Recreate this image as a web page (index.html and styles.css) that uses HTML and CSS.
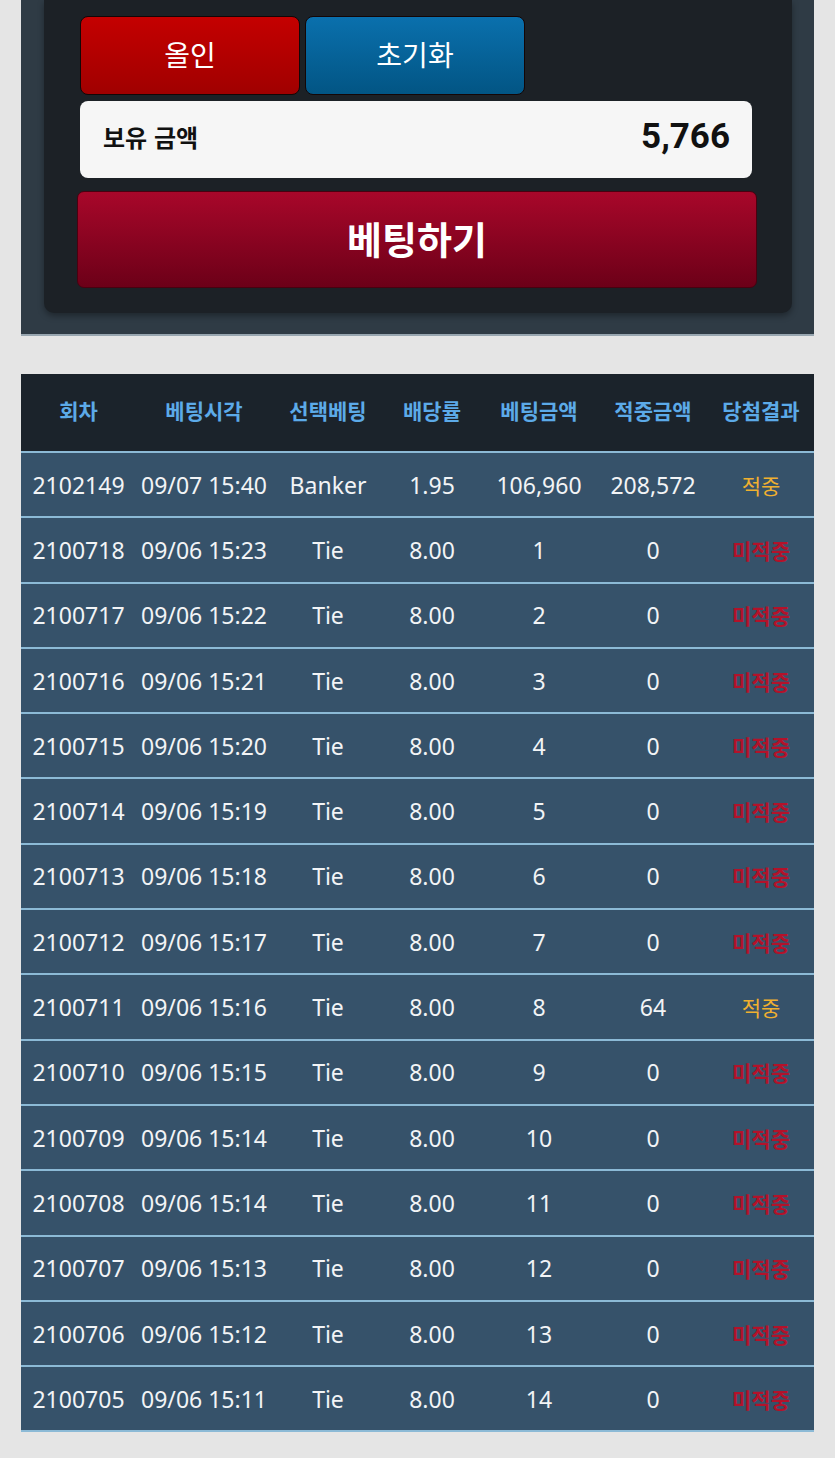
FILE: index.html
```html
<!DOCTYPE html>
<html lang="ko">
<head>
  <meta charset="UTF-8" />
  <meta name="viewport" content="width=device-width, initial-scale=1.0"/>
  <title>베팅</title>
  <link rel="stylesheet" href="styles.css">
</head>
<body>

  <!-- Bet Panel -->
  <div class="bet-wrap">
    <div class="bet-panel">
      <div class="quick-row">
        <button class="btn-allin">올인</button>
        <button class="btn-reset">초기화</button>
      </div>
      <div class="balance">
        <span class="balance-label">보유 금액</span>
        <span class="balance-value">5,766</span>
      </div>
      <button class="btn-bet">베팅하기</button>
    </div>
  </div>

  <!-- Bet History -->
  <table class="history">
    <colgroup>
      <col style="width:115px">
      <col style="width:136px">
      <col style="width:112px">
      <col style="width:96px">
      <col style="width:118px">
      <col style="width:110px">
      <col style="width:106px">
    </colgroup>
    <thead>
      <tr>
        <th>회차</th>
        <th>베팅시각</th>
        <th>선택베팅</th>
        <th>배당률</th>
        <th>베팅금액</th>
        <th>적중금액</th>
        <th>당첨결과</th>
      </tr>
    </thead>
    <tbody id="historyBody"></tbody>
  </table>

  <script>
    const rows = [
      ["2102149", "09/07 15:40", "Banker", "1.95", "106,960", "208,572", true],
      ["2100718", "09/06 15:23", "Tie", "8.00", "1", "0", false],
      ["2100717", "09/06 15:22", "Tie", "8.00", "2", "0", false],
      ["2100716", "09/06 15:21", "Tie", "8.00", "3", "0", false],
      ["2100715", "09/06 15:20", "Tie", "8.00", "4", "0", false],
      ["2100714", "09/06 15:19", "Tie", "8.00", "5", "0", false],
      ["2100713", "09/06 15:18", "Tie", "8.00", "6", "0", false],
      ["2100712", "09/06 15:17", "Tie", "8.00", "7", "0", false],
      ["2100711", "09/06 15:16", "Tie", "8.00", "8", "64", true],
      ["2100710", "09/06 15:15", "Tie", "8.00", "9", "0", false],
      ["2100709", "09/06 15:14", "Tie", "8.00", "10", "0", false],
      ["2100708", "09/06 15:14", "Tie", "8.00", "11", "0", false],
      ["2100707", "09/06 15:13", "Tie", "8.00", "12", "0", false],
      ["2100706", "09/06 15:12", "Tie", "8.00", "13", "0", false],
      ["2100705", "09/06 15:11", "Tie", "8.00", "14", "0", false]
    ];

    const body = document.getElementById("historyBody");
    rows.forEach(r => {
      const tr = document.createElement("tr");
      const result = r[6]
        ? '<td class="win">적중</td>'
        : '<td class="lose">미적중</td>';
      tr.innerHTML = r.slice(0, 6).map(v => `<td>${v}</td>`).join("") + result;
      body.appendChild(tr);
    });
  </script>

</body>
</html>
```

FILE: styles.css
```css
body {
  margin: 0;
  background-color: #e5e5e5;
  font-family: "Noto Sans", "Noto Sans CJK KR", sans-serif;
}
button {
  font-family: "Noto Sans CJK KR", sans-serif;
  color: white;
  cursor: pointer;
}
.bet-wrap {
  margin: 0 21px;
  padding: 0 22px 21px 23px;
  background-color: #2f3b45;
  border-bottom: 2px solid #98a6b0;
}
.bet-panel {
  padding: 16px 40px 25px 36px;
  background-color: #1c2126;
  border-radius: 0 0 10px 10px;
  box-shadow: 0 3px 6px rgba(0,0,0,0.35);
}
.quick-row {
  display: flex;
  gap: 5px;
}
.quick-row button {
  width: 220px;
  height: 79px;
  border: 1px solid #140606;
  border-radius: 8px;
  font-size: 28px;
  padding: 0 0 4px;
}
.btn-allin {
  background: linear-gradient(#c40000, #a00000);
}
.btn-reset {
  background: linear-gradient(#0a70ad, #025584);
}
.balance {
  display: flex;
  justify-content: space-between;
  align-items: center;
  height: 77px;
  margin-top: 6px;
  padding: 0 22px 6px 23px;
  box-sizing: border-box;
  background-color: #f6f6f6;
  border-radius: 8px;
  font-family: "Noto Sans CJK KR", sans-serif;
  color: #111;
}
.balance-label {
  font-size: 24px;
  font-weight: bold;
}
.balance-value {
  font-family: Roboto, sans-serif;
  font-size: 35px;
  font-weight: bold;
}
.btn-bet {
  display: block;
  width: 680px;
  height: 97px;
  margin: 13px -2px 0 -3px;
  border: 1px solid #4a0010;
  border-radius: 7px;
  background: linear-gradient(#a8072a, #6c0018);
  font-size: 38px;
  font-weight: bold;
  padding: 0 0 4px;
}
.history {
  width: 793px;
  margin: 38px 21px 0;
  border-collapse: collapse;
  table-layout: fixed;
  background-color: #36526a;
  color: #f2f4f6;
}
.history th {
  height: 71px;
  padding: 0 0 6px;
  background-color: #1b232b;
  color: #5caae8;
  font-family: "Noto Sans CJK KR", sans-serif;
  font-size: 21px;
  font-weight: bold;
  border-bottom: 2px solid #8cbad6;
  white-space: nowrap;
}
.history td {
  height: 63.3px;
  padding: 0;
  text-align: center;
  font-size: 23px;
  border-bottom: 2px solid #8cbad6;
  white-space: nowrap;
}
.history td.win,
.history td.lose {
  font-family: "Noto Sans CJK KR", sans-serif;
  font-size: 21px;
}
.history td.win {
  color: #f0b030;
}
.history td.lose {
  color: #b3122a;
  font-weight: bold;
}
```
